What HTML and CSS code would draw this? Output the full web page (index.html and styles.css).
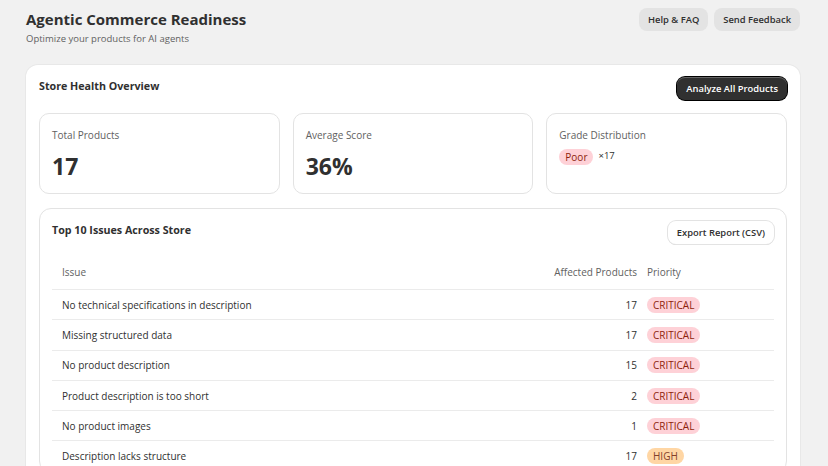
FILE: index.html
```html
<!DOCTYPE html>
<html lang="en">
<head>
  <meta charset="UTF-8" />
  <title>Agentic Commerce Readiness</title>
  <link rel="stylesheet" href="styles.css">
</head>
<body>
  <div class="page">
    <!-- Page header -->
    <div class="page-header">
      <div>
        <h1 class="page-title">Agentic Commerce Readiness</h1>
        <p class="page-subtitle">Optimize your products for AI agents</p>
      </div>
      <div class="header-actions">
        <button class="btn btn-secondary">Help &amp; FAQ</button>
        <button class="btn btn-secondary">Send Feedback</button>
      </div>
    </div>

    <!-- Store health card -->
    <div class="card">
      <div class="card-head">
        <h2 class="card-title">Store Health Overview</h2>
        <button class="btn btn-primary">Analyze All Products</button>
      </div>

      <div class="stats">
        <div class="stat">
          <div class="stat-label">Total Products</div>
          <div class="stat-value">17</div>
        </div>
        <div class="stat">
          <div class="stat-label">Average Score</div>
          <div class="stat-value">36%</div>
        </div>
        <div class="stat">
          <div class="stat-label">Grade Distribution</div>
          <div class="grades">
            <span class="badge badge-critical">Poor</span>
            <span class="grade-count">×17</span>
          </div>
        </div>
      </div>

      <div class="issues">
        <div class="card-head">
          <h3 class="card-title">Top 10 Issues Across Store</h3>
          <button class="btn btn-outline">Export Report (CSV)</button>
        </div>
        <table class="issues-table">
          <thead>
            <tr>
              <th class="col-issue">Issue</th>
              <th class="col-count">Affected Products</th>
              <th class="col-priority">Priority</th>
            </tr>
          </thead>
          <tbody>
            <tr>
              <td class="col-issue">No technical specifications in description</td>
              <td class="col-count">17</td>
              <td class="col-priority"><span class="badge badge-critical">CRITICAL</span></td>
            </tr>
            <tr>
              <td class="col-issue">Missing structured data</td>
              <td class="col-count">17</td>
              <td class="col-priority"><span class="badge badge-critical">CRITICAL</span></td>
            </tr>
            <tr>
              <td class="col-issue">No product description</td>
              <td class="col-count">15</td>
              <td class="col-priority"><span class="badge badge-critical">CRITICAL</span></td>
            </tr>
            <tr>
              <td class="col-issue">Product description is too short</td>
              <td class="col-count">2</td>
              <td class="col-priority"><span class="badge badge-critical">CRITICAL</span></td>
            </tr>
            <tr>
              <td class="col-issue">No product images</td>
              <td class="col-count">1</td>
              <td class="col-priority"><span class="badge badge-critical">CRITICAL</span></td>
            </tr>
            <tr>
              <td class="col-issue">Description lacks structure</td>
              <td class="col-count">17</td>
              <td class="col-priority"><span class="badge badge-high">HIGH</span></td>
            </tr>
          </tbody>
        </table>
      </div>
    </div>
  </div>
</body>
</html>
```

FILE: styles.css
```css
body {
  margin: 0;
  background: #f1f1f1;
  color: #303030;
  font-family: "Open Sans", "Noto Sans", sans-serif;
  font-size: 10px;
}
h1, h2, h3, p {
  margin: 0;
}
.page {
  padding: 8px 28px 0 26px;
}
.page-header {
  display: flex;
  justify-content: space-between;
  align-items: flex-start;
}
.page-title {
  font-size: 15px;
  font-weight: 700;
  line-height: 22px;
  color: #303030;
}
.page-subtitle {
  font-size: 9.5px;
  line-height: 16px;
  margin-top: 1px;
  margin-bottom: -1px;
  color: #616161;
}
.header-actions {
  display: flex;
  gap: 6px;
}
.btn {
  font-family: inherit;
  font-size: 9.4px;
  font-weight: 600;
  height: 23px;
  padding: 0 9px;
  border-radius: 8px;
  border: none;
  cursor: pointer;
}
.btn-secondary {
  background: #e3e3e3;
  color: #303030;
}
.btn-primary {
  background: #303030;
  color: #fff;
  box-shadow: 0 0 0 1px #000, inset 0 1px 0 rgba(255,255,255,.25);
}
.btn-outline {
  background: #fff;
  color: #303030;
  box-shadow: 0 0 0 1px #e3e3e3, 0 1px 0 #d4d4d4;
}

.card {
  margin-top: 19px;
  background: #fff;
  border-radius: 12px;
  padding: 12px 13px 13px;
  box-shadow: 0 0 0 1px #e8e8e8, 0 1px 0 #dcdcdc;
}
.card-head {
  display: flex;
  justify-content: space-between;
  align-items: flex-start;
}
.card-title {
  font-size: 10.7px;
  font-weight: 700;
  line-height: 18px;
}

.stats {
  display: grid;
  grid-template-columns: repeat(3, 1fr);
  gap: 13px;
  margin-top: 13px;
}
.stat {
  border: 1px solid #e3e3e3;
  border-radius: 10px;
  padding: 12px 12px 10px;
  height: 81px;
  box-sizing: border-box;
}
.stat-label {
  color: #616161;
  line-height: 16px;
  margin-top: 1px;
}
.stat-value {
  margin-top: 7px;
  font-size: 23px;
  font-weight: 700;
  line-height: 32px;
}
.grades {
  margin-top: 6px;
  display: flex;
  align-items: center;
  gap: 5px;
}
.grade-count {
  font-size: 9.5px;
  color: #303030;
  margin-top: -3px;
}

.badge {
  display: inline-block;
  padding: 0 6px;
  border-radius: 8px;
  line-height: 16px;
  font-size: 10px;
}
.badge-critical {
  background: #fed1d7;
  color: #8e1f0b;
}
.badge-high {
  background: #ffd6a4;
  color: #83402a;
}

.issues {
  margin-top: 14px;
  border: 1px solid #e3e3e3;
  border-radius: 12px;
  padding: 12px 12px 0;
}
.issues-table {
  width: 100%;
  border-collapse: collapse;
  margin-top: 10px;
}
.issues-table th {
  font-weight: 400;
  color: #616161;
  height: 35px;
  text-align: left;
}
.issues-table th,
.issues-table td {
  border-bottom: 1px solid #ebebeb;
  padding: 0;
  vertical-align: middle;
}
.issues-table td {
  height: 29.3px;
  color: #303030;
}
.issues-table .col-issue {
  padding-left: 10px;
}
.issues-table .col-count {
  text-align: right;
  white-space: nowrap;
  width: 1%;
  padding-right: 10px;
}
.issues-table .col-priority {
  width: 127px;
}
```
